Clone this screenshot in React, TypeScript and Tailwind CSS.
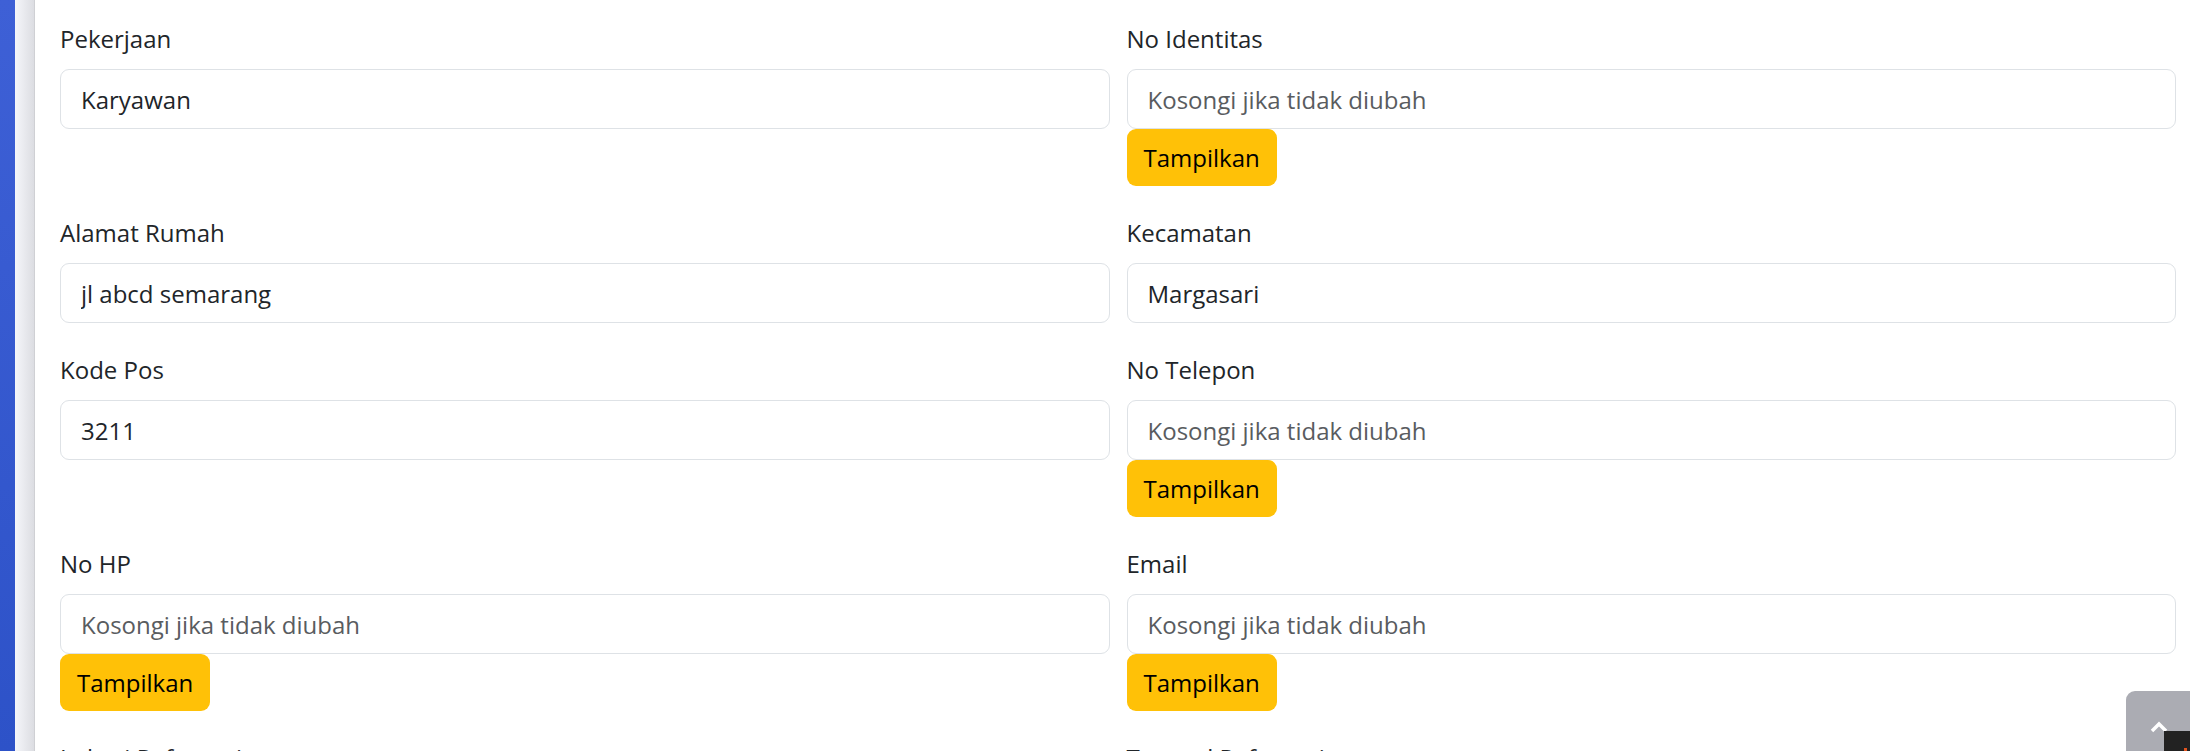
import { Fragment, type ReactNode } from "react";

interface Field {
  label: string;
  value?: string;
  placeholder?: string;
  toggle?: boolean;
}

const rows: [Field, Field][] = [
  [
    { label: "Pekerjaan", value: "Karyawan" },
    { label: "No Identitas", placeholder: "Kosongi jika tidak diubah", toggle: true },
  ],
  [
    { label: "Alamat Rumah", value: "jl abcd semarang" },
    { label: "Kecamatan", value: "Margasari" },
  ],
  [
    { label: "Kode Pos", value: "3211" },
    { label: "No Telepon", placeholder: "Kosongi jika tidak diubah", toggle: true },
  ],
  [
    { label: "No HP", placeholder: "Kosongi jika tidak diubah", toggle: true },
    { label: "Email", placeholder: "Kosongi jika tidak diubah", toggle: true },
  ],
  [
    { label: "Lokasi Referensi", value: "" },
    { label: "Tanggal Referensi", value: "" },
  ],
];

function FormField({ field }: { field: Field }) {
  return (
    <div className="flex flex-col items-start">
      <label className="block mb-[12px] text-[24px] leading-[36px] text-[#212529]">{field.label}</label>
      <input
        type="text"
        defaultValue={field.value}
        placeholder={field.placeholder}
        className="w-full h-[60px] px-[20px] rounded-[9px] border border-[#dee2e6] bg-white text-[24px] text-[#212529] placeholder:text-[#595c5f] outline-none"
      />
      {field.toggle && (
        <button className="h-[57px] px-[17px] rounded-[9px] bg-[#ffc107] text-[24px] text-black">Tampilkan</button>
      )}
    </div>
  );
}

function Shell({ children }: { children: ReactNode }) {
  return (
    <div
      className="relative flex w-[2190px] h-[751px] overflow-hidden bg-white"
      style={{ fontFamily: '"Open Sans", "Noto Sans", sans-serif' }}
    >
      <div className="w-[15px] shrink-0 bg-gradient-to-b from-[#3e60d6] to-[#2d52c8]" />
      <div className="w-[20px] shrink-0 bg-gradient-to-r from-[#f5f6fa] to-[#dcdde2] border-r border-[#cfd0d4]" />
      {children}
    </div>
  );
}

export default function App() {
  return (
    <Shell>
      <main className="flex-1 pl-[25px] pr-[14px] pt-[21px]">
        <div className="grid grid-cols-2 gap-x-[17px] gap-y-[29px]">
          {rows.map(([a, b]) => (
            <Fragment key={a.label}>
              <FormField field={a} />
              <FormField field={b} />
            </Fragment>
          ))}
        </div>
      </main>

      {/* back to top */}
      <div className="absolute left-[2126px] top-[691px] w-[80px] h-[80px] rounded-[9px] bg-[#abacb3]">
        <svg className="absolute left-[24px] top-[30px]" width="18" height="12" viewBox="0 0 18 12">
          <path d="M2 10 L9 3 L16 10" fill="none" stroke="white" strokeWidth="3.5" />
        </svg>
      </div>
      <div className="absolute left-[2164px] top-[731px] w-[40px] h-[40px] bg-[#222222]">
        <div className="absolute left-[20px] top-[17px] w-[3px] h-[3px] bg-[#e2541f]" />
      </div>
    </Shell>
  );
}
